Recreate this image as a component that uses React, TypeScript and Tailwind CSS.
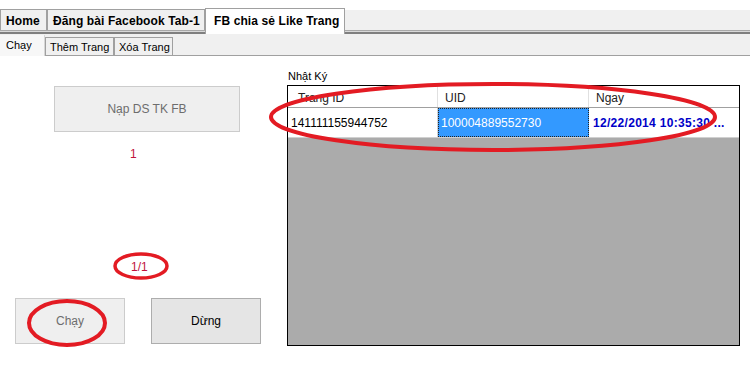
import React from "react";

const FONT = { fontFamily: '"Liberation Sans", Arial, sans-serif' };

function TopTab({ label, active }: { label: string; active?: boolean }) {
  if (active) {
    return (
      <div className="relative z-10 -mb-[4px] h-[26px] w-[140px] whitespace-nowrap border border-b-0 border-[#a0a0a0] bg-white pl-[8px] pt-[4px] text-[12px] font-bold leading-[16px] tracking-[0.1px] text-black">
        {label}
      </div>
    );
  }
  return (
    <div className="h-[21px] whitespace-nowrap border border-b-0 border-[#a0a0a0] bg-[#f0f0f0] pl-[5px] pt-[3px] text-[12px] font-bold leading-[16px] tracking-[0.1px] text-black">
      {label}
    </div>
  );
}

function SubTab({ label, active, w }: { label: string; active?: boolean; w: string }) {
  return (
    <div
      className={
        active
          ? `relative z-10 -mb-px h-[21px] ${w} whitespace-nowrap border-r border-[#d6d6d6] bg-[#f7f7f7] pl-[6px] pt-[3px] text-[11px] leading-[14px] text-black`
          : `h-[18px] ${w} whitespace-nowrap border border-b-0 border-[#a0a0a0] bg-[#f0f0f0] pl-[4px] pt-[2px] text-[11px] leading-[14px] text-black`
      }
    >
      {label}
    </div>
  );
}

function Annotations() {
  return (
    <svg className="pointer-events-none absolute left-0 top-0" width={750} height={372}>
      <ellipse cx={493} cy={117} rx={222} ry={33} fill="none" stroke="#e31b23" strokeWidth={4} />
      <ellipse cx={141} cy={266} rx={26} ry={12} fill="none" stroke="#e31b23" strokeWidth={3.5} />
      <ellipse cx={67} cy={323} rx={38} ry={22} fill="none" stroke="#e31b23" strokeWidth={4} />
    </svg>
  );
}

export default function App() {
  return (
    <div className="relative h-[372px] w-[750px] overflow-hidden bg-white" style={FONT}>
      {/* main tabs */}
      <div className="h-[10px]" />
      <div className="flex h-[20px] items-end bg-[#f0f0f0]">
        <div className="flex w-[47px] shrink-0 flex-col">
          <TopTab label="Home" />
        </div>
        <div className="flex w-[158px] shrink-0 flex-col">
          <TopTab label="Đăng bài Facebook Tab-1" />
        </div>
        <TopTab label="FB chia sẻ Like Trang" active />
      </div>
      <div className="h-[4px] border-t border-[#a8a8a8] bg-[#7f7f7f] [box-shadow:inset_0_1px_0_#d8d8d8]" />

      {/* sub tabs */}
      <div className="flex h-[22px] items-end border-b border-[#a0a0a0] bg-[#f0f0f0]">
        <SubTab label="Chạy" active w="w-[45px]" />
        <SubTab label="Thêm Trang" w="w-[69px]" />
        <SubTab label="Xóa Trang" w="w-[59px]" />
      </div>

      {/* content */}
      <div className="flex">
        <div className="flex w-[287px] shrink-0 flex-col">
          <div className="ml-[54px] mt-[30px] flex h-[46px] w-[186px] items-center justify-center border border-[#cccccc] bg-[#efefef] text-[12px] text-[#6d6d6d]">
            Nạp DS TK FB
          </div>
          <div className="ml-[130px] mt-[15px] text-[12px] leading-[14px] text-[#c0143c]">1</div>
          <div className="ml-[131px] mt-[99px] text-[12px] leading-[14px] text-[#c0143c]">1/1</div>
          <div className="mt-[24px] flex">
            <div className="ml-[15px] flex h-[46px] w-[110px] items-center justify-center border border-[#cccccc] bg-[#efefef] text-[12px] text-[#6d6d6d]">
              Chạy
            </div>
            <div className="ml-[26px] flex h-[46px] w-[110px] items-center justify-center border border-[#adadad] bg-[#e5e5e5] text-[12px] text-black">
              Dừng
            </div>
          </div>
        </div>

        <div className="flex flex-col pt-[13px]">
          <div className="ml-px text-[11px] leading-[15px] text-black">Nhật Ký</div>
          <div className="mt-px flex h-[261px] w-[453px] flex-col border border-black bg-[#ababab]">
            <div className="flex h-[22px] border-b border-[#a0a0a0] bg-white text-[12px] text-[#222]">
              <div className="w-[150px] border-r border-[#e0e0e0] pl-[10px] pt-[3px]">Trang ID</div>
              <div className="w-[151px] border-r border-[#e0e0e0] pl-[7px] pt-[3px]">UID</div>
              <div className="flex-1 pl-[7px] pt-[3px]">Ngay</div>
            </div>
            <div className="flex h-[30px] border-b border-[#d0d0d0] bg-white text-[12px]">
              <div className="flex w-[150px] items-center border-r border-[#d0d0d0] pl-[3px] text-black">
                141111155944752
              </div>
              <div className="flex w-[151px] items-center border border-dotted border-[#222] bg-[#3399ff] pl-[2px] text-white">
                100004889552730
              </div>
              <div className="flex flex-1 items-center whitespace-nowrap pl-[4px] font-bold tracking-[0.3px] text-[#0000c8]">
                12/22/2014 10:35:30 ...
              </div>
            </div>
          </div>
        </div>
      </div>

      <Annotations />
    </div>
  );
}
